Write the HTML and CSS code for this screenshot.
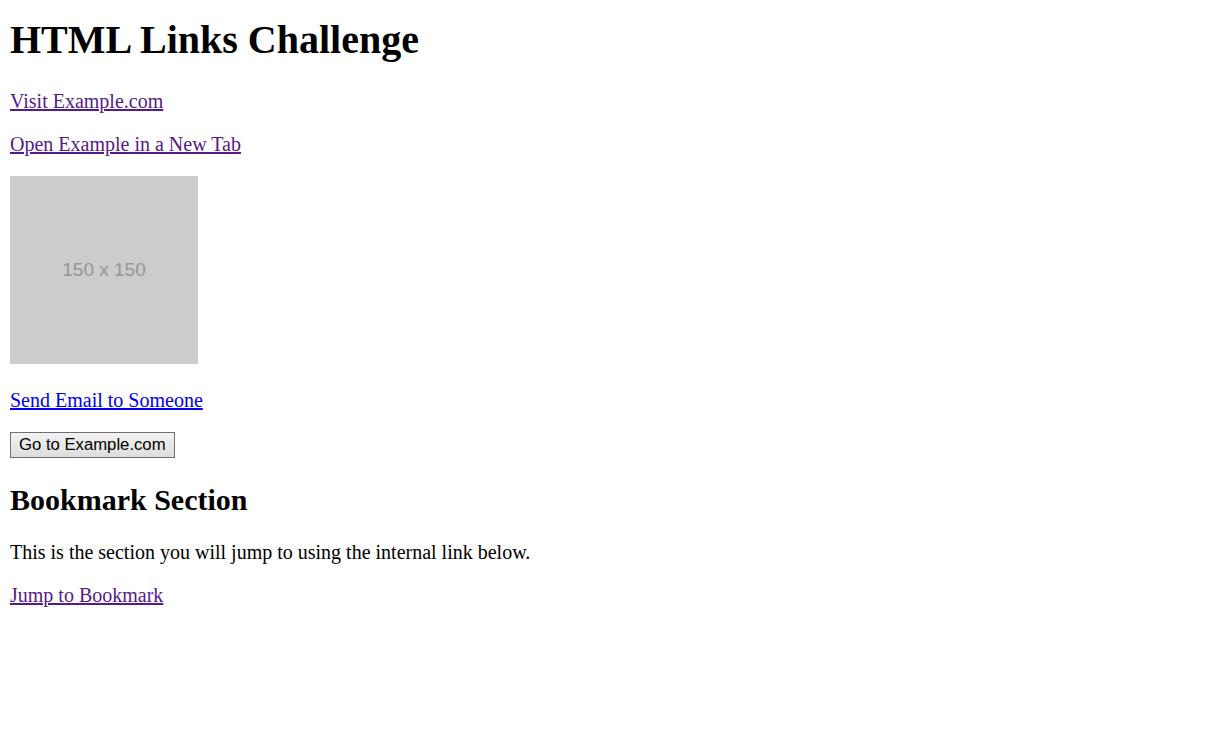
FILE: index.html
```html
<!DOCTYPE html>
<html lang="en">
<head>
<meta charset="utf-8">
<title>HTML Links Challenge</title>
<link rel="stylesheet" href="styles.css">
</head>
<body class="page">
<h1 class="title">HTML Links Challenge</h1>
<p class="para"><a class="link visited" href="#">Visit Example.com</a></p>
<p class="para"><a class="link visited" href="#">Open Example in a New Tab</a></p>
<p class="para"><a class="img-link" href="#"><span class="placeholder">150 x 150</span></a></p>
<p class="para"><a class="link" href="#">Send Email to Someone</a></p>
<p class="para"><button class="btn" type="button">Go to Example.com</button></p>
<h2 class="subtitle" id="bookmark">Bookmark Section</h2>
<p class="para">This is the section you will jump to using the internal link below.</p>
<p class="para"><a class="link visited" href="#bookmark">Jump to Bookmark</a></p>
</body>
</html>
```
FILE: styles.css
```css
html { background: #fff; }
.page {
  margin: 0 10px 10px;
  padding-top: 16px;
  font-family: "Liberation Serif", "Times New Roman", serif;
  font-size: 20px;
  color: #000;
}
.title {
  font-size: 40px;
  font-weight: bold;
  margin: 0 0 26.8px;
}
.subtitle {
  font-size: 30px;
  font-weight: bold;
  margin: 24.4px 0;
}
.para {
  margin: 20px 0;
}
.link {
  color: #0000ee;
  text-decoration: underline;
}
.link.visited {
  color: #551a8b;
}
.img-link {
  display: inline-block;
  overflow: hidden;
  vertical-align: baseline;
  text-decoration: none;
}
.placeholder {
  display: flex;
  align-items: center;
  justify-content: center;
  width: 188px;
  height: 188px;
  background: #cccccc;
  color: #969696;
  font-family: "Liberation Sans", Arial, sans-serif;
  font-size: 19px;
}
.btn {
  font-family: "Liberation Sans", Arial, sans-serif;
  font-size: 16.7px;
  color: #000;
  background: linear-gradient(#f2f2f2, #dddddd);
  border: 1px solid #707070;
  border-radius: 0;
  padding: 2.25px 8px;
  margin: 0;
}
```
